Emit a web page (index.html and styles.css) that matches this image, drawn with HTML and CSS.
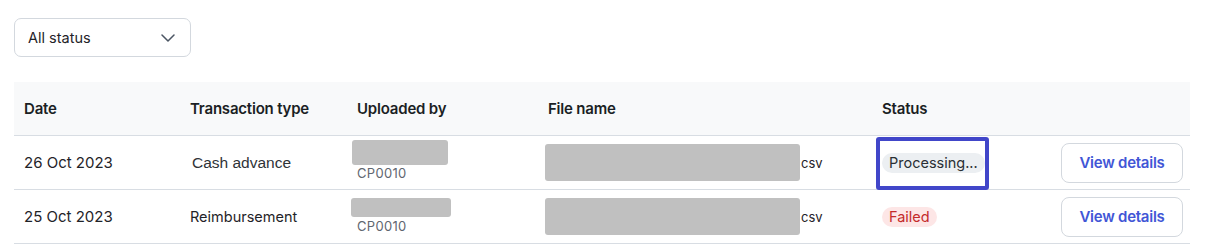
FILE: index.html
```html
<!DOCTYPE html>
<html lang="en">
<head>
<meta charset="utf-8">
<title>Uploads</title>
<link rel="stylesheet" href="styles.css">
</head>
<body>
<div class="page">
  <div class="filter">
    <span>All status</span>
    <svg class="chev" width="14" height="8" viewBox="0 0 14 8"><path d="M1 1l6 6 6-6" fill="none" stroke="#4b5563" stroke-width="1.5" stroke-linecap="round" stroke-linejoin="round"/></svg>
  </div>

  <div class="table">
    <div class="row head">
      <div class="cell">Date</div>
      <div class="cell">Transaction type</div>
      <div class="cell">Uploaded by</div>
      <div class="cell">File name</div>
      <div class="cell">Status</div>
      <div class="cell"></div>
    </div>

    <div class="row">
      <div class="cell c-date">26 Oct 2023</div>
      <div class="cell c-type"><span class="alt-font">Cash advance</span></div>
      <div class="cell c-up up-1">
        <div class="redact r-user-1"></div>
        <div class="code">CP0010</div>
      </div>
      <div class="cell c-file">
        <div class="redact r-file"></div><span class="ext">csv</span>
      </div>
      <div class="cell c-status">
        <span class="badge badge-gray">Processing...</span>
        <span class="focus-ring"></span>
      </div>
      <div class="cell c-act"><button class="btn">View details</button></div>
    </div>

    <div class="row">
      <div class="cell c-date">25 Oct 2023</div>
      <div class="cell c-type">Reimbursement</div>
      <div class="cell c-up up-2">
        <div class="redact r-user-2"></div>
        <div class="code">CP0010</div>
      </div>
      <div class="cell c-file">
        <div class="redact r-file"></div><span class="ext">csv</span>
      </div>
      <div class="cell c-status">
        <span class="badge badge-red">Failed</span>
      </div>
      <div class="cell c-act"><button class="btn">View details</button></div>
    </div>
  </div>
</div>
</body>
</html>
```

FILE: styles.css
```css
* { box-sizing: border-box; }
html, body { margin: 0; padding: 0; background: #fff; }
body {
  font-family: Inter, "Noto Sans", sans-serif;
  font-size: 15px;
  color: #1f2328;
}
.page { padding: 18px 25px 0 14px; }

.filter {
  width: 177px;
  height: 39px;
  border: 1px solid #d3d8de;
  border-radius: 7px;
  display: flex;
  align-items: center;
  justify-content: space-between;
  padding: 0 15px 0 13px;
  color: #1f2328;
  font-size: 14.5px;
}
.chev { display: block; }

.table { margin-top: 25px; }
.row {
  display: grid;
  grid-template-columns: 166px 167px 191px 334px 179px 139px;
  height: 54px;
  border-bottom: 1px solid #d8dde3;
  align-items: center;
}
.row.head {
  background: #f8f9fa;
  font-weight: 600;
  color: #1b1f24;
  letter-spacing: -0.2px;
}
.cell { padding-left: 10px; position: relative; }
.c-type { font-size: 14.5px; }
.c-type .alt-font {
  font-family: "Liberation Sans", Arial, sans-serif;
  font-size: 15.5px;
  color: #2f3337;
  margin-left: 2px;
}

.c-up { align-self: stretch; display: flex; flex-direction: column; }
.up-1 { padding-top: 4px; padding-left: 5px; }
.up-2 { padding-top: 8px; padding-left: 4px; }
.redact { background: #c0c0c0; border-radius: 3px; }
.r-user-1 { width: 96px; height: 25px; }
.r-user-2 { width: 100px; height: 19px; }
.code {
  font-size: 13px;
  letter-spacing: 0.3px;
  color: #5f6670;
  margin-top: 1px;
  padding-left: 5px;
  line-height: 15px;
}
.up-2 .code { margin-top: 2px; padding-left: 6px; }

.c-file { display: flex; align-items: center; padding-left: 7px; }
.r-file { width: 255px; height: 37px; }
.ext { font-size: 13px; margin-left: 1px; color: #1f2328; }

.badge {
  display: inline-block;
  height: 20px;
  line-height: 20px;
  padding: 0 7px;
  border-radius: 10px;
  font-size: 14.5px;
}
.badge-gray { background: #eceff2; color: #2a2f35; }
.badge-red { background: #fde6e6; color: #c42b2b; }

.focus-ring {
  position: absolute;
  left: 4px;
  top: -16px;
  width: 113px;
  height: 53px;
  border: 4px solid #4146c9;
  border-radius: 3px;
  pointer-events: none;
}

.c-act { padding-left: 10px; }
.btn {
  width: 122px;
  height: 40px;
  background: #fff;
  border: 1px solid #d3d8de;
  border-radius: 8px;
  font-family: Inter, "Noto Sans", sans-serif;
  font-size: 15px;
  letter-spacing: -0.25px;
  font-weight: 600;
  color: #4156d6;
  padding: 0;
}
```
